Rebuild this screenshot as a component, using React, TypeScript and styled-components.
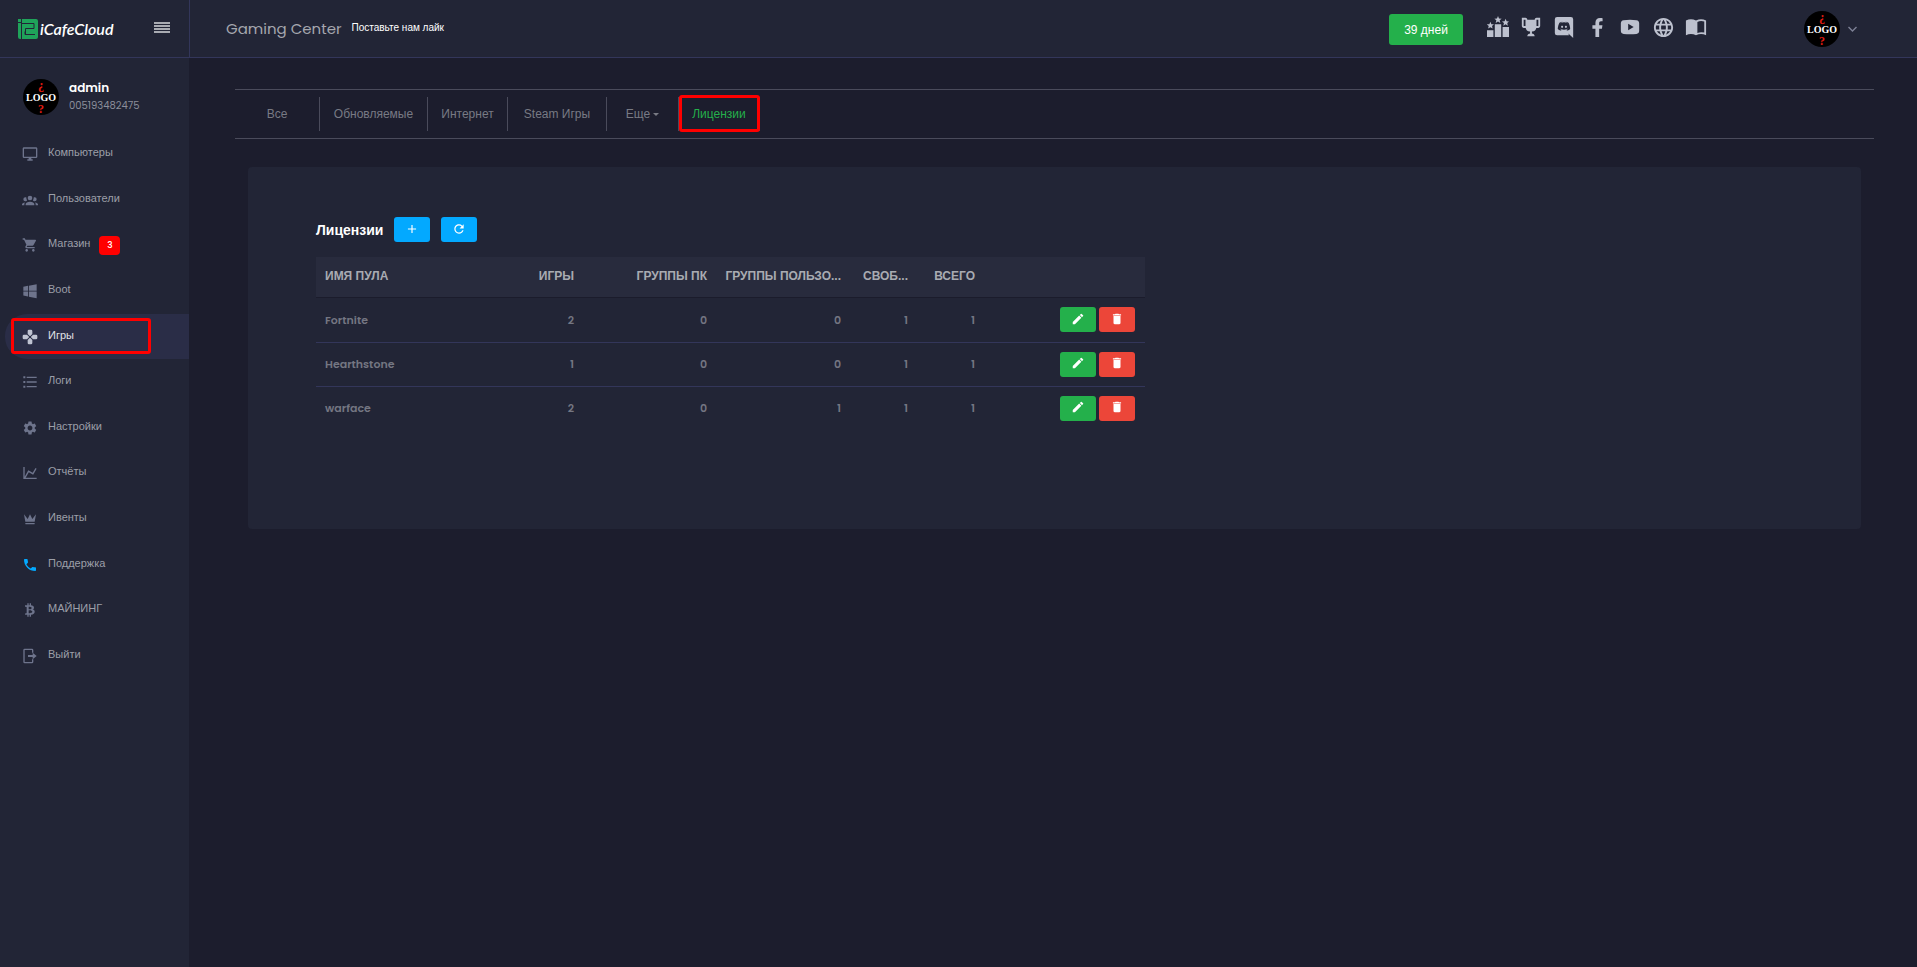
import React from "react";
import styled, { createGlobalStyle, css } from "styled-components";
import { MdSettings, MdPhone, MdLanguage, MdAdd, MdRefresh, MdEdit, MdDelete } from "react-icons/md";
import { FaFacebookF } from "react-icons/fa";

const ARIAL = `"Liberation Sans", Arial, sans-serif`;
const GEO = `Poppins, Inter, "Liberation Sans", sans-serif`;

const c = {
  page: "#1c1d2d",
  panel: "#222536",
  line: "#33365a",
  rule: "#4a4b5b",
  blue: "#03a9ff",
  green: "#24b04b",
  red: "#ec4639",
  icon: "#6e748c",
  text: "#9c9fa8",
  top: "#bdc1ce",
};

const Global = createGlobalStyle`
  *, *::before, *::after { box-sizing: border-box; }
  body { margin: 0; background: ${c.page}; font-family: ${ARIAL}; color: ${c.text}; }
  button { border: 0; padding: 0; font: inherit; color: inherit; background: none; cursor: pointer; }
  a { color: inherit; text-decoration: none; }
  ul { list-style: none; margin: 0; padding: 0; }
  svg { display: block; flex: none; }
`;

const Page = styled.div`
  display: grid;
  grid-template-columns: 189px minmax(0, 1fr);
  grid-template-rows: 58px 1fr;
  min-height: 100vh;
`;
const Brand = styled.div`
  display: flex;
  align-items: center;
  justify-content: space-between;
  padding: 0 19px 0 18px;
  background: ${c.panel};
  border-bottom: 1px solid ${c.line};
`;
const Logo = styled.a`
  display: flex;
  align-items: center;
  gap: 2px;
  color: #fff;
  font: italic 600 16px/20px Lato, sans-serif;
`;
const Burger = styled.button`
  display: grid;
  gap: 1px;
  width: 16px;
  padding-bottom: 2px;
  i { height: 2px; background: #a9abb2; }
`;
const Header = styled.header`
  display: flex;
  align-items: center;
  padding: 0 60px 0 36px;
  background: ${c.panel};
  border-left: 1px solid ${c.line};
  border-bottom: 1px solid ${c.line};
`;
const CafeName = styled.span`
  font: 400 15px/24px ${GEO};
  color: #a5a7ae;
`;
const LikeLink = styled.a`
  margin-left: 10px;
  font-size: 10px;
  line-height: 16px;
  padding-bottom: 2px;
  color: #fff;
`;
const Days = styled.button`
  width: 74px;
  height: 31px;
  margin: 2px 0 0 auto;
  border-radius: 3px;
  background: ${c.green};
  color: #fff;
  font-size: 12px;
`;
const Socials = styled.nav`
  display: flex;
  align-items: center;
  gap: 9px;
  margin: 0 96px 0 23px;
  padding-bottom: 3px;
  color: ${c.top};
  a { display: grid; place-items: center; width: 24px; height: 24px; }
`;
const Account = styled.button`
  display: flex;
  align-items: center;
  gap: 8px;
  color: #7d8095;
`;

const Sidebar = styled.aside`
  background: ${c.panel};
`;
const Profile = styled.div`
  display: flex;
  align-items: center;
  gap: 10px;
  height: 73px;
  padding: 4px 0 0 23px;
`;
const UserText = styled.div`
  padding-bottom: 2px;
`;
const UserName = styled.div`
  font: 600 12px/20px ${GEO};
  color: #fff;
`;
const UserId = styled.div`
  font: 400 10px/16px ${GEO};
  color: #8b8e9a;
`;
const Item = styled.a<{ $active?: boolean; $tint?: string }>`
  display: flex;
  align-items: center;
  gap: 10px;
  height: 45px;
  margin-left: 5px;
  padding: 0 0 3px 17px;
  border-radius: 22px 0 0 22px;
  font-size: 11px;
  line-height: 16px;
  color: ${c.text};
  svg { color: ${(p) => p.$tint ?? c.icon}; margin-top: 4px; }
  ${(p) => p.$active && css`
    position: relative;
    background: #2a2d47;
    color: #e0e1e6;
    svg { color: #bfc3d2; }
    &::after {
      content: "";
      position: absolute;
      inset: 4px 38px 5px 6px;
      border: 3px solid #f00;
      border-radius: 3px;
    }
  `}
`;
const List = styled.ul`
  display: flex;
  flex-direction: column;
  justify-content: space-between;
  height: 547px;
`;
const Badge = styled.span`
  width: 21px;
  height: 19px;
  margin: 4px 0 0 -1px;
  border-radius: 4px;
  background: #f00;
  color: #fff;
  font: 500 9px/19px ${GEO};
  text-align: center;
`;

const Main = styled.main`
  padding: 31px 43px 0 46px;
`;
const Tabs = styled.nav`
  display: flex;
  align-items: center;
  height: 50px;
  border: 1px solid ${c.rule};
  border-width: 1px 0;
`;
const Tab = styled.a<{ $w: number; $active?: boolean }>`
  display: flex;
  align-items: center;
  justify-content: center;
  gap: 3px;
  width: ${(p) => p.$w}px;
  height: 34px;
  border-right: 1px solid ${c.rule};
  font-size: 12px;
  color: #787a84;
  ${(p) => p.$active && css`
    position: relative;
    color: ${c.green};
    &::after {
      content: "";
      position: absolute;
      inset: -2px -1px -1px 0;
      border: 3px solid #f00;
      border-radius: 3px;
    }
  `}
`;
const Caret = styled.i`
  border: 3px solid transparent;
  border-top-color: currentColor;
  border-bottom: 0;
`;
const Panel = styled.section`
  min-height: 362px;
  margin: 28px 13px 0 13px;
  padding: 50px 68px 0;
  border-radius: 4px;
  background: ${c.panel};
`;
const PanelHead = styled.div`
  display: flex;
  align-items: center;
  gap: 11px;
  height: 25px;
`;
const Title = styled.h1`
  margin: 0;
  font: 700 14px/24px ${ARIAL};
  color: #fff;
`;
const Action = styled.button<{ $tone: string }>`
  display: inline-grid;
  place-items: center;
  width: 36px;
  height: 25px;
  border-radius: 3px;
  background: ${(p) => p.$tone};
  color: #fff;
  svg { margin-bottom: 2px; }
`;
const Table = styled.table`
  width: 829px;
  max-width: 100%;
  margin-top: 15px;
  table-layout: fixed;
  border-collapse: collapse;
  text-align: right;
  th, td { padding: 0 9px; }
  th:first-child, td:first-child { text-align: left; }
  td:last-child { padding-right: 10px; }
  th {
    height: 40px;
    padding-bottom: 2px;
    background: #282b3d;
    font-size: 12px;
    font-weight: 700;
    white-space: nowrap;
    color: #a9abb2;
  }
  td {
    height: 44px;
    font: 600 11px/16px ${GEO};
    color: #747682;
  }
  tbody tr:first-child td { height: 45px; }
  tbody tr + tr { border-top: 1px solid ${c.line}; }
  thead tr { border-bottom: 1px solid #1b1c2c; }
`;
const Pair = styled.div`
  display: flex;
  justify-content: flex-end;
  gap: 3px;
`;

const Glyph = ({ d, size = 16 }: { d: string; size?: number }) => (
  <svg viewBox="0 0 24 24" width={size} height={size} fill="currentColor" fillRule="evenodd" aria-hidden="true">
    <path d={d} />
  </svg>
);

const icons = {
  monitor: "M21,16H3V4H21M21,2H3C1.89,2 1,2.89 1,4V16A2,2 0 0,0 3,18H10V20H8V22H16V20H14V18H21A2,2 0 0,0 23,16V4C23,2.89 22.1,2 21,2Z",
  group: "M12,5.5A3.5,3.5 0 0,1 15.5,9A3.5,3.5 0 0,1 12,12.5A3.5,3.5 0 0,1 8.5,9A3.5,3.5 0 0,1 12,5.5M5,8C5.56,8 6.08,8.15 6.53,8.42C6.38,9.85 6.8,11.27 7.66,12.38C7.16,13.34 6.16,14 5,14A3,3 0 0,1 2,11A3,3 0 0,1 5,8M19,8A3,3 0 0,1 22,11A3,3 0 0,1 19,14C17.84,14 16.84,13.34 16.34,12.38C17.2,11.27 17.62,9.85 17.47,8.42C17.92,8.15 18.44,8 19,8M5.5,18.25C5.5,16.18 8.41,14.5 12,14.5C15.59,14.5 18.5,16.18 18.5,18.25V20H5.5V18.25M0,20V18.5C0,17.11 1.89,15.94 4.45,15.6C3.86,16.28 3.5,17.22 3.5,18.25V20H0M24,20H20.5V18.25C20.5,17.22 20.14,16.28 19.55,15.6C22.11,15.94 24,17.11 24,18.5V20Z",
  cart: "M17,18C15.89,18 15,18.89 15,20A2,2 0 0,0 17,22A2,2 0 0,0 19,20C19,18.89 18.1,18 17,18M1,2V4H3L6.6,11.59L5.24,14.04C5.09,14.32 5,14.65 5,15A2,2 0 0,0 7,17H19V15H7.42A0.25,0.25 0 0,1 7.17,14.75C7.17,14.7 7.18,14.66 7.2,14.63L8.1,13H15.55C16.3,13 16.96,12.58 17.3,11.97L20.88,5.5C20.95,5.34 21,5.17 21,5A1,1 0 0,0 20,4H5.21L4.27,2M7,18C5.89,18 5,18.89 5,20A2,2 0 0,0 7,22A2,2 0 0,0 9,20C9,18.89 8.1,18 7,18Z",
  windows: "M2,11.700V5.500L9,4.200V11.600M22,2V11.500L10.300,11.600V4L22,2M2,12.800H9V20.200L2,18.900V12.800M22,12.900V23L10.300,20.500V12.800Z",
  pad: "M16.5,8.5L13.5,11.5V12.5L16.5,15.5H21A2,2 0 0,0 23,13.5V10.500A2,2 0 0,0 21,8.5M8.5,16.5V21A2,2 0 0,0 10.5,23H13.5A2,2 0 0,0 15.5,21V16.5L12.5,13.5H11.5M7.5,8.5H3A2,2 0 0,0 1,10.5V13.5A2,2 0 0,0 3,15.5H7.5L10.5,12.5V11.5M15.5,7.5V3A2,2 0 0,0 13.5,1H10.5A2,2 0 0,0 8.5,3V7.5L11.5,10.500H12.5Z",
  list: "M7,4H22V6H7M7,11H22V13H7M7,18H22V20H7M2,3.5H5V6.5H2M2,10.5H5V13.5H2M2,17.5H5V20.5H2Z",
  chart: "M16,11.78L20.24,4.45L21.97,5.45L16.74,14.5L10.23,10.75L5.46,19H22V21H2V3H4V17.54L9.5,8L16,11.78Z",
  crown: "M5,16L3,5L8.5,12L12,5L15.5,12L21,5L19,16H5M19,19C19,19.6 18.6,20 18,20H6C5.4,20 5,19.6 5,19V18H19V19Z",
  bitcoin: "M4.5,5H8V2H10V5H11.5V2H13.5V5C19,5 19,11 16,11.25C20,11 21,19 13.5,19V22H11.5V19H10V22H8V19H4.5L5,17H6A1,1 0 0,0 7,16V8A1,1 0 0,0 6,7H4.5V5M10,7V11C10,11 14.5,11.25 14.5,9C14.5,6.75 10,7 10,7M10,12.5V17C10,17 15.5,17 15.5,14.75C15.5,12.5 10,12.5 10,12.5Z",
  exit: "M4,1H15A2,2 0 0,1 17,3V7H15V3H4V21H15V17H17V21A2,2 0 0,1 15,23H4A2,2 0 0,1 2,21V3A2,2 0 0,1 4,1M9,10.5H16V7L22,12L16,17V13.5H9Z",
  podium: "M0,15.5H7V23H0M8.5,9H15.5V23H8.5M17,12H24V23H17M12,0L13.1,2.7L16,2.9L13.8,4.7L14.5,7.5L12,6L9.5,7.5L10.2,4.7L8,2.9L10.9,2.7M3.7,6.2L4.8,8.9L7.6,9.1L5.5,10.9L6.1,13.7L3.7,12.2L1.2,13.7L1.9,10.9L-0.3,9.1L2.6,8.9M20.3,3L21.4,5.7L24.2,5.9L22.1,7.7L22.7,10.5L20.3,9L17.8,10.5L18.5,7.7L16.3,5.9L19.2,5.7Z",
  trophy: "M20.2,2H18C17.1,2 16,3 16,4H8C8,3 6.9,2 6,2H2V11C2,12 3,13 4,13H6.2C6.6,15 7.9,16.7 11,17V19.08C8,19.54 8,22 8,22H16C16,22 16,19.54 13,19.08V17C16.1,16.7 17.4,15 17.8,13H20C21,13 22,12 22,11V2H20.2M4,11V4H6V11H4M20,11H18V4H20V11Z",
  discord: "M22,24L16.75,19L17.38,21H4.5A2.5,2.5 0 0,1 2,18.5V3.5A2.5,2.5 0 0,1 4.5,1H19.5A2.5,2.5 0 0,1 22,3.5V24M12,6.8C9.32,6.8 7.44,7.95 7.44,7.95C8.47,7.03 10.27,6.5 10.27,6.5L10.1,6.33C8.41,6.36 6.88,7.53 6.88,7.53C5.16,11.12 5.27,14.22 5.27,14.22C6.67,16.03 8.75,15.9 8.75,15.9L9.46,15C8.21,14.73 7.42,13.62 7.42,13.62C7.42,13.62 9.3,14.9 12,14.9C14.7,14.9 16.58,13.62 16.58,13.62C16.58,13.62 15.79,14.73 14.54,15L15.25,15.9C15.25,15.9 17.33,16.03 18.73,14.22C18.73,14.22 18.84,11.12 17.12,7.53C17.12,7.53 15.59,6.36 13.9,6.33L13.73,6.5C13.73,6.5 15.53,7.03 16.56,7.95C16.56,7.95 14.68,6.8 12,6.8M9.93,10.59C10.58,10.59 11.11,11.16 11.1,11.86C11.1,12.55 10.58,13.13 9.93,13.13C9.29,13.13 8.77,12.55 8.77,11.86C8.77,11.16 9.28,10.59 9.93,10.59M14.1,10.59C14.75,10.59 15.27,11.16 15.27,11.86C15.27,12.55 14.75,13.13 14.1,13.13C13.46,13.13 12.94,12.55 12.94,11.86C12.94,11.16 13.45,10.59 14.1,10.59Z",
  youtube: "M5,4.5Q12,3.5 19,4.5Q22,5 22,8V16Q22,19 19,19.5Q12,20.5 5,19.5Q2,19 2,16V8Q2,5 5,4.5M10,8.5V15.5L16,12Z",
  book: "M1,5Q6.5,2 12,5Q17.5,2 23,5V21Q17.5,18 12,21Q6.5,18 1,21ZM13.5,6.5V18.5Q17,17 21,18V6Q17,4.5 13.5,6.5Z",
};

const Avatar = () => (
  <svg width="36" height="36" viewBox="0 0 36 36" role="img" aria-label="LOGO">
    <circle cx="18" cy="18" r="18" fill="#000" />
    <g textAnchor="middle" fontFamily="'Liberation Serif', serif" fontWeight="700">
      <text x="18" y="10" fontSize="12" fill="#e01b10">¿</text>
      <text x="18" y="22" fontSize="10" fill="#fff">LOGO</text>
      <text x="18" y="34" fontSize="12" fill="#e01b10">?</text>
    </g>
  </svg>
);

type MenuItem = { label: string; icon: React.ReactNode; active?: boolean; badge?: number; tint?: string };
const menu: MenuItem[] = [
  { label: "Компьютеры", icon: <Glyph d={icons.monitor} /> },
  { label: "Пользователи", icon: <Glyph d={icons.group} /> },
  { label: "Магазин", icon: <Glyph d={icons.cart} />, badge: 3 },
  { label: "Boot", icon: <Glyph d={icons.windows} /> },
  { label: "Игры", icon: <Glyph d={icons.pad} />, active: true },
  { label: "Логи", icon: <Glyph d={icons.list} /> },
  { label: "Настройки", icon: <MdSettings size={16} /> },
  { label: "Отчёты", icon: <Glyph d={icons.chart} /> },
  { label: "Ивенты", icon: <Glyph d={icons.crown} /> },
  { label: "Поддержка", icon: <MdPhone size={16} />, tint: c.blue },
  { label: "МАЙНИНГ", icon: <Glyph d={icons.bitcoin} /> },
  { label: "Выйти", icon: <Glyph d={icons.exit} /> },
];
const socials: [string, React.ReactNode][] = [
  ["Рейтинг", <Glyph d={icons.podium} size={22} />],
  ["Турниры", <Glyph d={icons.trophy} size={22} />],
  ["Discord", <Glyph d={icons.discord} size={22} />],
  ["Facebook", <FaFacebookF size={19} />],
  ["YouTube", <Glyph d={icons.youtube} size={22} />],
  ["Сайт", <MdLanguage size={23} />],
  ["Документация", <Glyph d={icons.book} size={22} />],
];
const tabs: [string, number][] = [["Все", 85], ["Обновляемые", 108], ["Интернет", 80], ["Steam Игры", 99], ["Еще", 72], ["Лицензии", 81]];
const columns: [string, number][] = [["ИМЯ ПУЛА", 168], ["ИГРЫ", 99], ["ГРУППЫ ПК", 133], ["ГРУППЫ ПОЛЬЗО...", 134], ["СВОБ...", 67], ["ВСЕГО", 67], ["", 161]];
const rows = [
  ["Fortnite", 2, 0, 0, 1, 1],
  ["Hearthstone", 1, 0, 0, 1, 1],
  ["warface", 2, 0, 1, 1, 1],
];

export default function App() {
  return (
    <Page>
      <Global />
      <Brand>
        <Logo href="#">
          <svg width="20" height="20" viewBox="0 0 20 20" aria-hidden="true">
            <path fill="#1fa35a" d="M0 0H3V3H0ZM0 4H3V20H2Q0 20 0 18ZM4 0H18Q20 0 20 2V18Q20 20 18 20H4Z" />
            <path fill="none" stroke="#222536" d="M4 4.5H16V9.5H7.5V16M7 12.5V15.5H17" />
          </svg>
          iCafeCloud
        </Logo>
        <Burger aria-label="Меню"><i /><i /><i /><i /></Burger>
      </Brand>
      <Header>
        <CafeName>Gaming Center</CafeName>
        <LikeLink href="#">Поставьте нам лайк</LikeLink>
        <Days>39 дней</Days>
        <Socials>
          {socials.map(([name, icon]) => <a key={name} href="#" aria-label={name}>{icon}</a>)}
        </Socials>
        <Account aria-label="Аккаунт">
          <Avatar />
          <svg width="9" height="6" viewBox="0 0 9 6" fill="none" stroke="currentColor" strokeWidth="1.4"><path d="M.5 1L4.5 5L8.5 1" /></svg>
        </Account>
      </Header>
      <Sidebar>
        <Profile>
          <Avatar />
          <UserText>
            <UserName>admin</UserName>
            <UserId>005193482475</UserId>
          </UserText>
        </Profile>
        <List>
          {menu.map((m) => (
            <li key={m.label}>
              <Item href="#" $active={m.active} $tint={m.tint}>
                {m.icon}
                {m.label}
                {m.badge && <Badge>{m.badge}</Badge>}
              </Item>
            </li>
          ))}
        </List>
      </Sidebar>
      <Main>
        <Tabs>
          {tabs.map(([label, w]) => (
            <Tab key={label} href="#" $w={w} $active={label === "Лицензии"}>
              {label}
              {label === "Еще" && <Caret />}
            </Tab>
          ))}
        </Tabs>
        <Panel>
          <PanelHead>
            <Title>Лицензии</Title>
            <Action $tone={c.blue} aria-label="Добавить"><MdAdd size={14} /></Action>
            <Action $tone={c.blue} aria-label="Обновить"><MdRefresh size={14} /></Action>
          </PanelHead>
          <Table>
            <colgroup>{columns.map(([name, w]) => <col key={name} width={w} />)}</colgroup>
            <thead>
              <tr>{columns.map(([name]) => <th key={name} scope="col">{name}</th>)}</tr>
            </thead>
            <tbody>
              {rows.map((r) => (
                <tr key={r[0]}>
                  {r.map((v, i) => <td key={i}>{v}</td>)}
                  <td>
                    <Pair>
                      <Action $tone={c.green} aria-label="Изменить"><MdEdit size={14} /></Action>
                      <Action $tone={c.red} aria-label="Удалить"><MdDelete size={14} /></Action>
                    </Pair>
                  </td>
                </tr>
              ))}
            </tbody>
          </Table>
        </Panel>
      </Main>
    </Page>
  );
}
